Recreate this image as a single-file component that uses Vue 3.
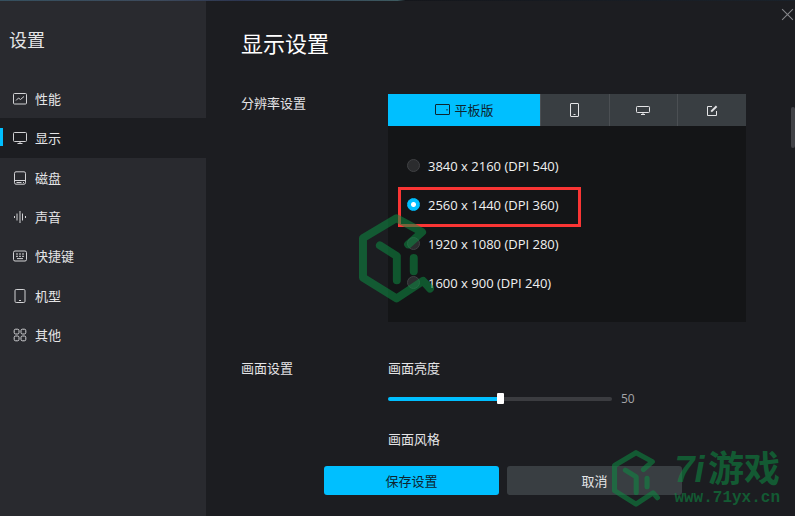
<script setup>
import { ref } from 'vue'

const menus = [
  { key: 'performance', label: '性能' },
  { key: 'display', label: '显示' },
  { key: 'disk', label: '磁盘' },
  { key: 'sound', label: '声音' },
  { key: 'hotkey', label: '快捷键' },
  { key: 'model', label: '机型' },
  { key: 'other', label: '其他' },
]

const resolutions = [
  { value: '2160', label: '3840 x 2160 (DPI 540)' },
  { value: '1440', label: '2560 x 1440 (DPI 360)' },
  { value: '1080', label: '1920 x 1080 (DPI 280)' },
  { value: '900', label: '1600 x 900 (DPI 240)' },
]

const activeMenu = ref('display')
const activeTab = ref('tablet')
const resolution = ref('1440')
const brightness = ref(50)
</script>

<template>
  <div class="settings">
    <aside class="sidebar">
      <h2 class="sidebar-title">设置</h2>
      <nav class="menu">
        <button
          v-for="item in menus"
          :key="item.key"
          type="button"
          class="menu-item"
          :class="{ active: item.key === activeMenu }"
          @click="activeMenu = item.key"
        >
          <svg class="menu-icon" viewBox="0 0 14 14">
            <template v-if="item.key === 'performance'">
              <rect x="0.5" y="1.5" width="13" height="10.5" rx="1" />
              <path d="M3 8.5 5.5 6l2 1.5L11 4.5" />
            </template>
            <template v-else-if="item.key === 'display'">
              <rect x="0.5" y="1.5" width="13" height="9" rx="1" />
              <path d="M7 10.5v2M4.5 12.5h5" />
            </template>
            <template v-else-if="item.key === 'disk'">
              <rect x="1.5" y="0.8" width="11" height="12.4" rx="1.5" />
              <path d="M1.5 9.5h11M3.5 11.5h5M10 11.5h1" />
            </template>
            <template v-else-if="item.key === 'sound'">
              <path d="M1.5 6v2M4 3.5v7M7 1v12M9.5 3.5v7M12.5 6v2" />
            </template>
            <template v-else-if="item.key === 'hotkey'">
              <rect x="0.5" y="2" width="13" height="10" rx="1.5" />
              <path d="M3 5h2M6 5h2M9 5h2M3 7.3h2M6 7.3h2M9 7.3h2M4 9.6h6" />
            </template>
            <template v-else-if="item.key === 'model'">
              <rect x="2" y="0.5" width="10" height="13" rx="1.2" />
              <path d="M6 11.5h2" />
            </template>
            <template v-else>
              <rect x="1.2" y="1.2" width="4.8" height="4.8" rx="1.4" />
              <rect x="8" y="1.2" width="4.8" height="4.8" rx="1.4" />
              <rect x="1.2" y="8" width="4.8" height="4.8" rx="1.4" />
              <rect x="8" y="8" width="4.8" height="4.8" rx="1.4" />
            </template>
          </svg>
          <span>{{ item.label }}</span>
        </button>
      </nav>
    </aside>

    <main class="main">
      <button type="button" class="close" aria-label="关闭">
        <svg viewBox="0 0 12 12"><path d="M1 1l10 10M11 1 1 11" /></svg>
      </button>
      <div class="scroll-thumb"></div>

      <div class="content">
        <h1 class="title">显示设置</h1>

        <section class="row resolution-row">
          <h3 class="row-label">分辨率设置</h3>
          <div class="resolution">
            <div class="tabs">
              <button
                type="button"
                class="tab tab-wide"
                :class="{ active: activeTab === 'tablet' }"
                @click="activeTab = 'tablet'"
              >
                <svg viewBox="0 0 16 14">
                  <rect x="1.5" y="1.5" width="14" height="10" rx="0.5" />
                  <path d="M13 6v1.5" />
                </svg>
                平板版
              </button>
              <button
                type="button"
                class="tab"
                :class="{ active: activeTab === 'phone' }"
                aria-label="手机版"
                @click="activeTab = 'phone'"
              >
                <svg viewBox="0 0 16 14">
                  <rect x="3.5" y="0.5" width="8" height="13" rx="0.5" />
                  <path d="M6.5 11.5h2" />
                </svg>
              </button>
              <button
                type="button"
                class="tab"
                :class="{ active: activeTab === 'wide' }"
                aria-label="超宽屏"
                @click="activeTab = 'wide'"
              >
                <svg viewBox="0 0 16 14">
                  <rect x="0.5" y="3.5" width="13" height="6" rx="0.8" />
                  <path d="M7 9.5v2M5 11.5h4" />
                </svg>
              </button>
              <button
                type="button"
                class="tab"
                :class="{ active: activeTab === 'custom' }"
                aria-label="自定义"
                @click="activeTab = 'custom'"
              >
                <svg viewBox="0 0 16 14">
                  <path d="M8 3.5H3.5v9h9V8" />
                  <path class="pen" d="M7.2 8.6 12.6 3.2" />
                </svg>
              </button>
            </div>

            <div class="panel">
              <label
                v-for="item in resolutions"
                :key="item.value"
                class="option"
                :class="{ marked: item.value === '1440' }"
              >
                <input v-model="resolution" type="radio" name="resolution" :value="item.value" />
                <span>{{ item.label }}</span>
              </label>
            </div>

            <svg class="watermark-large" viewBox="57 221 226 267">
              <g class="mark">
                <path d="M205 312 247 275 170 233 69 293V412L170 475 250 422 271 445" />
                <path d="M120 315 171 347V420M222 353V393" />
              </g>
            </svg>
          </div>
        </section>

        <section class="row">
          <h3 class="row-label">画面设置</h3>
          <div class="picture">
            <label class="field-label" for="brightness">画面亮度</label>
            <div class="slider-line">
              <input
                id="brightness"
                v-model="brightness"
                class="slider"
                type="range"
                min="0"
                max="100"
                :style="{ '--percent': brightness + '%' }"
              />
              <span class="slider-value">{{ brightness }}</span>
            </div>
            <div class="field-label">画面风格</div>
          </div>
        </section>
      </div>

      <footer class="footer">
        <button type="button" class="btn primary">保存设置</button>
        <button type="button" class="btn">取消</button>
      </footer>
    </main>

    <div class="watermark">
      <svg class="watermark-logo" viewBox="57 221 226 267">
        <g class="mark">
          <path d="M205 312 247 275 170 233 69 293V412L170 475 250 422 271 445" />
          <path d="M120 315 171 347V420M222 353V393" />
        </g>
      </svg>
      <div class="watermark-text">
        <div class="watermark-name"><i>7i</i><span>游戏</span></div>
        <div class="watermark-url">www.71yx.cn</div>
      </div>
    </div>
  </div>
</template>

<style>
body {
  margin: 0;
  background: #1c1d21;
}
</style>

<style scoped>
.settings {
  position: relative;
  display: flex;
  min-height: 100vh;
  box-sizing: border-box;
  overflow: hidden;
  background: #1c1d21;
  color: #e4e4e6;
  font-family: 'Open Sans', 'Noto Sans CJK SC', sans-serif;
  font-size: 13px;
  line-height: 20px;
}

.settings::before {
  content: '';
  position: absolute;
  top: 0;
  left: 0;
  right: 0;
  height: 1px;
  background: linear-gradient(90deg, #35505f 0, #3d4a5c 20%, #2c3550 30%, #3d5a60 50%, #14161b 51%, #1a222b 100%);
}

h1,
h2,
h3 {
  margin: 0;
  font-weight: 400;
}

button {
  padding: 0;
  border: 0;
  background: none;
  color: inherit;
  font: inherit;
  cursor: pointer;
}

svg {
  fill: none;
  stroke: currentColor;
}

.sidebar {
  flex: 0 0 206px;
  background: #292a2f;
}

.sidebar-title {
  padding: 27px 0 0 9px;
  font-size: 18px;
  line-height: 26px;
}

.menu {
  display: grid;
  grid-auto-rows: 1fr;
  min-height: 276px;
  margin-top: 26px;
}

.menu-item {
  position: relative;
  display: flex;
  align-items: center;
  gap: 8px;
  padding-left: 13px;
}

.menu-item.active {
  background: #1c1d21;
}

.menu-item.active::before {
  content: '';
  position: absolute;
  left: 0;
  top: 10px;
  width: 3px;
  height: 18px;
  background: #00bfff;
}

.menu-icon {
  width: 14px;
  height: 14px;
  color: #d2d2d5;
}

.main {
  position: relative;
  flex: 1;
  min-width: 0;
}

.close {
  position: absolute;
  top: 8px;
  right: 1px;
  width: 13px;
  height: 13px;
  color: #85868a;
}

.close svg {
  display: block;
}

.scroll-thumb {
  position: absolute;
  top: 107px;
  right: 0;
  width: 4px;
  height: 41px;
  border-radius: 2px;
  background: #414247;
}

.content {
  padding: 28px 49px 0 35px;
}

.title {
  color: #fff;
  font-size: 22px;
  line-height: 30px;
}

.row {
  display: flex;
}

.resolution-row {
  margin-top: 36px;
}

.row-label {
  flex: 0 0 147px;
  margin-top: -1px;
  font-size: 13px;
}

.resolution {
  position: relative;
  flex: 1;
}

.tabs {
  display: flex;
  height: 32px;
}

.tab {
  display: flex;
  flex: 1;
  align-items: center;
  justify-content: center;
  border-left: 1px solid #4b4f53;
  background: #393e42;
}

.tab-wide {
  flex: 0 0 152px;
  gap: 4px;
  border-left: 0;
}

.tab.active {
  background: #00bfff;
  color: #0d2530;
}

.tab svg {
  width: 16px;
  height: 14px;
}

.tab .pen {
  stroke-width: 2;
}

.panel {
  padding: 20px 19px;
  background: #141517;
}

.option {
  position: relative;
  display: flex;
  align-items: center;
  gap: 8px;
  height: 39px;
  color: #f0f0f0;
}

.option.marked::after {
  content: '';
  position: absolute;
  top: 2px;
  left: -9px;
  width: 177px;
  height: 34px;
  border: 3px solid #fa3534;
}

.option input {
  appearance: none;
  width: 13px;
  height: 13px;
  margin: 0;
  border: 1px solid #404144;
  border-radius: 50%;
  background: #2b2c2e;
}

.option input:checked {
  border-color: #00bfff;
  background: radial-gradient(circle, #fff 2px, #00bfff 3px);
}

.picture {
  flex: 1;
}

.resolution-row + .row {
  margin-top: 37px;
}

.field-label {
  display: block;
  margin-top: -1px;
}

.slider-line {
  display: flex;
  align-items: center;
  gap: 9px;
  margin: 11px 0 21px;
}

.slider {
  appearance: none;
  width: 224px;
  height: 11px;
  margin: 0;
  background: none;
}

.slider::-webkit-slider-runnable-track {
  height: 4px;
  border-radius: 2px;
  background: linear-gradient(90deg, #00bfff var(--percent), #3b3c40 var(--percent));
}

.slider::-webkit-slider-thumb {
  appearance: none;
  width: 7px;
  height: 11px;
  margin-top: -4px;
  border-radius: 1px;
  background: #fff;
}

.slider-value {
  color: #a5a5a8;
  font-size: 12px;
}

.footer {
  display: grid;
  grid-template-columns: 1fr 1fr;
  gap: 8px;
  padding: 17px 113px 21px 118px;
}

.btn {
  height: 29px;
  border-radius: 3px;
  background: #393e42;
}

.btn.primary {
  background: #00bfff;
  color: #0d2530;
}

.mark {
  stroke: #0d8c42;
  stroke-width: 24;
  stroke-linecap: round;
  stroke-linejoin: round;
}

.watermark-large {
  position: absolute;
  top: 120px;
  left: -29px;
  width: 75px;
  height: 89px;
  opacity: 0.55;
}

.watermark {
  position: absolute;
  right: 15px;
  bottom: 9px;
  display: flex;
  gap: 14px;
  color: #0d8c42;
  opacity: 0.55;
  pointer-events: none;
}

.watermark-logo {
  width: 48px;
  height: 57px;
}

.watermark-name {
  display: flex;
  justify-content: space-between;
  height: 39px;
  font-family: 'Liberation Sans', 'Noto Sans CJK SC', sans-serif;
  font-size: 36px;
  font-weight: 700;
  line-height: 39px;
}

.watermark-url {
  font-family: 'Liberation Mono', monospace;
  font-size: 16px;
  font-weight: 700;
  line-height: 18px;
}
</style>
